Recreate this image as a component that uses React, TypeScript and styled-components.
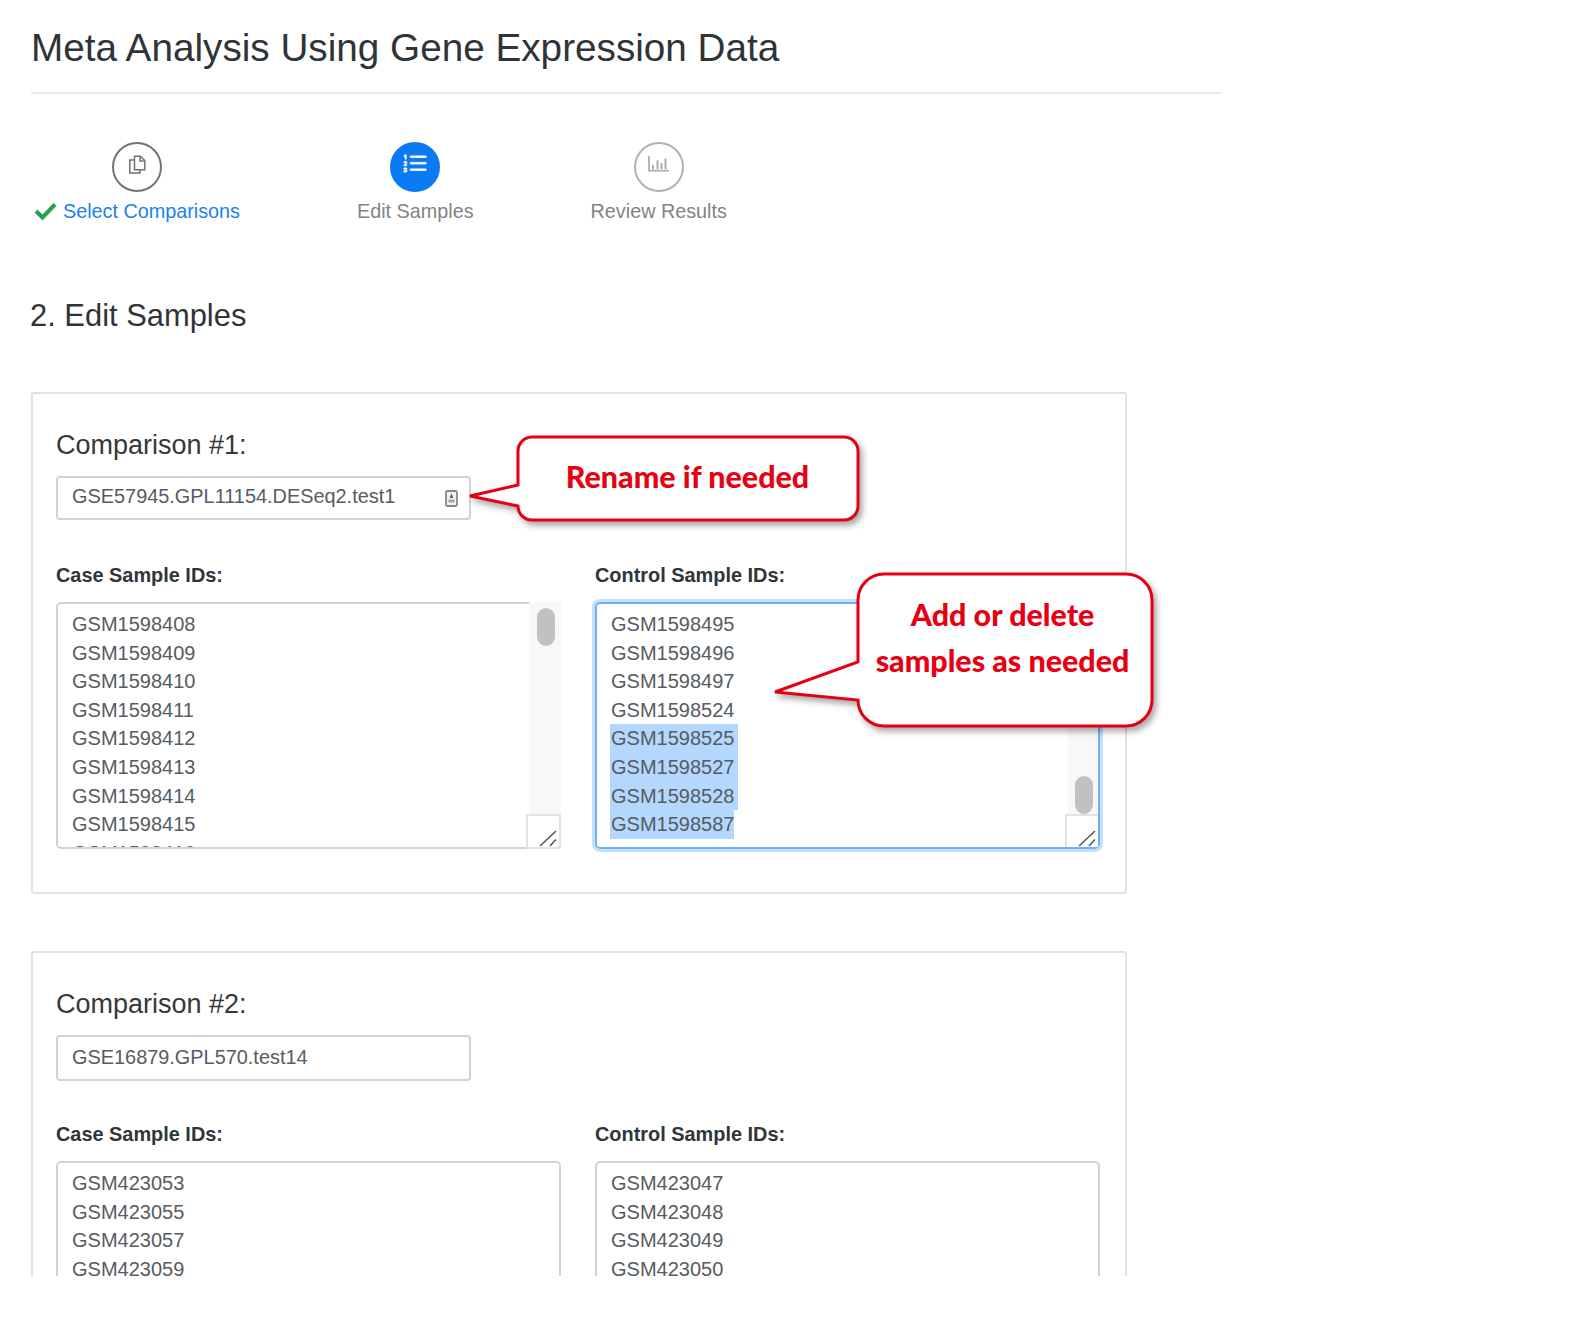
import styled, { createGlobalStyle } from "styled-components";
import { BsListOl } from "react-icons/bs";

const GlobalStyle = createGlobalStyle`
  html, body {
    margin: 0;
    padding: 0;
    background: #fff;
    font-family: "Liberation Sans", Arial, sans-serif;
  }
`;

const Page = styled.div`
  height: 1276px;
  width: 1222px;
  padding-left: 31px;
  overflow: hidden;
`;
const Title = styled.h1`
  margin: 0;
  height: 94px;
  width: 1191px;
  padding-top: 24px;
  box-sizing: border-box;
  border-bottom: 2px solid #e9e9e9;
  font-size: 38.7px;
  line-height: 48px;
  font-weight: 400;
  color: #2f3439;
  white-space: nowrap;
`;
const Steps = styled.div`
  display: flex;
  gap: 117px;
  margin-top: 48px;
  padding-left: 3px;
`;
const Step = styled.div`
  display: flex;
  flex-direction: column;
  align-items: center;
  gap: 5px;
`;
const StepCircle = styled.div<{ $state: "done" | "active" | "todo" }>`
  width: 50px;
  height: 50px;
  box-sizing: border-box;
  padding-bottom: 6px;
  border-radius: 50%;
  display: flex;
  align-items: center;
  justify-content: center;
  border: 2px solid
    ${(p) => (p.$state === "done" ? "#6f7479" : p.$state === "active" ? "#0a7bf3" : "#b0b3b6")};
  background: ${(p) => (p.$state === "active" ? "#0a7bf3" : "#fff")};
`;
const StepLabel = styled.div<{ $done?: boolean }>`
  display: flex;
  align-items: center;
  gap: 6px;
  font-size: 19.8px;
  line-height: 28px;
  color: ${(p) => (p.$done ? "#1a82ec" : "#808487")};
`;
const ListIcon = styled(BsListOl)`
  color: #fff;
  stroke: #fff;
  stroke-width: 0.5px;
`;
const SectionTitle = styled.h2`
  margin: 71px 0 0 -1px;
  font-size: 30.9px;
  line-height: 40px;
  font-weight: 400;
  color: #2f3439;
`;
const Card = styled.section<{ $top: number }>`
  position: relative;
  width: 1096px;
  box-sizing: border-box;
  margin-top: ${(p) => p.$top}px;
  padding: 33px 26px 43px 23px;
  border: 2px solid #e2e2e2;
  border-radius: 3px;
`;
const CardTitle = styled.div`
  font-size: 27px;
  line-height: 36px;
  color: #33383d;
`;
const NameInput = styled.div<{ $height: number; $below: number; $lift: number }>`
  width: 415px;
  height: ${(p) => p.$height}px;
  box-sizing: border-box;
  margin: 13px 0 ${(p) => p.$below}px;
  padding: 0 14px ${(p) => p.$lift}px;
  border: 2px solid #ced3d8;
  border-radius: 4px;
  display: flex;
  align-items: center;
  justify-content: space-between;
  font-size: 19.9px;
  color: #565c62;
`;
const Columns = styled.div`
  display: grid;
  grid-template-columns: 505px 505px;
  gap: 34px;
`;
const FieldLabel = styled.div`
  font-size: 19.9px;
  line-height: 28px;
  font-weight: 700;
  color: #30353a;
  margin-bottom: 13px;
`;
const ListBox = styled.div<{ $focused?: boolean }>`
  height: 247px;
  box-sizing: border-box;
  display: flex;
  border: 2px solid ${(p) => (p.$focused ? "#6eb2f5" : "#ced3d8")};
  border-radius: 5px;
  box-shadow: ${(p) => (p.$focused ? "0 0 0 3px #c5e0fd" : "none")};
`;
const Rows = styled.div`
  flex: 1;
  min-width: 0;
  overflow: hidden;
  padding: 6px 14px 0;
`;
const Row = styled.div`
  height: 28.6px;
  line-height: 28.6px;
  font-size: 20px;
  color: #565c62;
`;
const RowText = styled.span<{ $selected?: boolean; $last?: boolean }>`
  display: inline-block;
  height: 100%;
  background: ${(p) => (p.$selected ? "#b3d7fd" : "transparent")};
  margin-left: -1px;
  padding-left: 1px;
  padding-right: ${(p) => (p.$selected && !p.$last ? "4px" : "0")};
`;
const ScrollBar = styled.div<{ $cover?: boolean }>`
  width: ${(p) => (p.$cover ? 32 : 30)}px;
  margin: ${(p) => (p.$cover ? "-2px -2px -2px 0" : "0")};
  flex: none;
  display: flex;
  flex-direction: column;
  background: #f8f8f8;
  box-sizing: border-box;
`;
const ScrollTrack = styled.div<{ $atEnd?: boolean }>`
  flex: 1;
  display: flex;
  flex-direction: column;
  justify-content: ${(p) => (p.$atEnd ? "flex-end" : "flex-start")};
  align-items: center;
  padding-top: 6px;
`;
const ScrollThumb = styled.div`
  width: 18px;
  height: 38px;
  margin-left: 1px;
  border-radius: 9px;
  background: #c1c1c1;
`;
const Resizer = styled.div<{ $cover?: boolean }>`
  height: ${(p) => (p.$cover ? 35 : 33)}px;
  box-sizing: border-box;
  margin-left: -3px;
  background: #fff;
  border: 2px solid #e2e2e2;
  border-right-width: ${(p) => (p.$cover ? 2 : 0)}px;
  border-bottom-width: ${(p) => (p.$cover ? 2 : 0)}px;
  border-radius: 0 0 ${(p) => (p.$cover ? 4 : 0)}px 0;
  display: flex;
  align-items: flex-end;
  justify-content: flex-end;
`;
const Callout = styled.div<{
  $left: number;
  $top: number;
  $w: number;
  $h: number;
  $textLeft: number;
  $textBottom: number;
}>`
  position: absolute;
  left: ${(p) => p.$left}px;
  top: ${(p) => p.$top}px;
  width: ${(p) => p.$w}px;
  height: ${(p) => p.$h}px;
  padding: 0 0 ${(p) => p.$textBottom}px ${(p) => p.$textLeft}px;
  box-sizing: border-box;
  display: flex;
  flex-direction: column;
  align-items: center;
  justify-content: center;
`;
const CalloutShape = styled.svg`
  position: absolute;
  inset: 0;
  overflow: visible;
  filter: drop-shadow(3px 4px 3px rgba(0, 0, 0, 0.35));
`;
const CalloutText = styled.div`
  position: relative;
  font-family: Lato, "Open Sans", sans-serif;
  font-weight: 900;
  font-size: 30.4px;
  line-height: 46px;
  color: #e60012;
  white-space: nowrap;
`;
const AutofillSvg = styled.svg`
  flex: none;
  margin: 5px -3px 0 0;
`;

const FilesIcon = () => (
  <svg width="18" height="19" viewBox="0 0 18 19" fill="none" stroke="#6f7479" strokeWidth="1.5">
    <path d="M6.5 1.2h6l4.3 4.3v9.3H6.5z" />
    <path d="M12 1.2v4.8h4.8" />
    <path d="M6.5 5H1.8v13H12v-3.2" />
  </svg>
);

const ChartIcon = () => (
  <svg width="21" height="16" viewBox="0 0 21 16" fill="none" stroke="#a9acaf">
    <path d="M1 0v14.6h20" strokeWidth="1.7" />
    <path d="M5 13V9M9.5 13V4.5M13.5 13V7M17.5 13V2.5" strokeWidth="2" />
  </svg>
);

const CheckIcon = () => (
  <svg width="23" height="18" viewBox="0 0 23 18" fill="none" stroke="#22a34c" strokeWidth="4">
    <path d="M2 9l6.5 6.5L21 2.5" />
  </svg>
);

const AutofillIcon = () => (
  <AutofillSvg width="13" height="17" viewBox="0 0 13 17" fill="none">
    <rect x="1" y="1" width="11" height="15" rx="1.5" stroke="#85898d" strokeWidth="1.8" fill="#f1f1f1" />
    <path d="M6.5 3.5l2 4.5h-4z" fill="#5f6368" />
    <rect x="3.5" y="9.5" width="6" height="3" fill="#a5a8ab" />
  </AutofillSvg>
);

const ResizeGrip = () => (
  <svg width="22" height="18" viewBox="0 0 22 18" fill="none" stroke="#55595d" strokeWidth="1.6">
    <path d="M3 17L19 2M13 17l6-6.5" />
  </svg>
);

interface SampleListProps {
  ids: string[];
  selectedFrom?: number;
  focused?: boolean;
  scroll?: "top" | "end";
}

const SampleList = ({ ids, selectedFrom, focused, scroll }: SampleListProps) => (
  <ListBox $focused={focused}>
    <Rows>
      {ids.map((id, i) => {
        const selected = selectedFrom !== undefined && i >= selectedFrom;
        return (
          <Row key={id}>
            <RowText $selected={selected} $last={i === ids.length - 1}>
              {id}
            </RowText>
          </Row>
        );
      })}
    </Rows>
    {scroll && (
      <ScrollBar $cover={!focused}>
        <ScrollTrack $atEnd={scroll === "end"}>
          <ScrollThumb />
        </ScrollTrack>
        <Resizer $cover={!focused}>
          <ResizeGrip />
        </Resizer>
      </ScrollBar>
    )}
  </ListBox>
);

const App = () => (
  <Page>
    <GlobalStyle />
    <Title>Meta Analysis Using Gene Expression Data</Title>
    <Steps>
      <Step>
        <StepCircle $state="done">
          <FilesIcon />
        </StepCircle>
        <StepLabel $done>
          <CheckIcon />
          Select Comparisons
        </StepLabel>
      </Step>
      <Step>
        <StepCircle $state="active">
          <ListIcon size={26} />
        </StepCircle>
        <StepLabel>Edit Samples</StepLabel>
      </Step>
      <Step>
        <StepCircle $state="todo">
          <ChartIcon />
        </StepCircle>
        <StepLabel>Review Results</StepLabel>
      </Step>
    </Steps>
    <SectionTitle>2. Edit Samples</SectionTitle>

    <Card $top={56}>
      <CardTitle>Comparison #1:</CardTitle>
      <NameInput $height={44} $below={41} $lift={4}>
        GSE57945.GPL11154.DESeq2.test1
        <AutofillIcon />
      </NameInput>
      <Columns>
        <div>
          <FieldLabel>Case Sample IDs:</FieldLabel>
          <SampleList
            scroll="top"
            ids={[
              "GSM1598408",
              "GSM1598409",
              "GSM1598410",
              "GSM1598411",
              "GSM1598412",
              "GSM1598413",
              "GSM1598414",
              "GSM1598415",
              "GSM1598416",
            ]}
          />
        </div>
        <div>
          <FieldLabel>Control Sample IDs:</FieldLabel>
          <SampleList
            focused
            scroll="end"
            selectedFrom={4}
            ids={[
              "GSM1598495",
              "GSM1598496",
              "GSM1598497",
              "GSM1598524",
              "GSM1598525",
              "GSM1598527",
              "GSM1598528",
              "GSM1598587",
            ]}
          />
        </div>
      </Columns>
      <Callout $left={437} $top={41} $w={390} $h={87} $textLeft={45} $textBottom={5}>
        <CalloutShape width="390" height="87" viewBox="0 0 390 87">
          <path
            d="M48 16a14 14 0 0 1 14-14h312a14 14 0 0 1 14 14v55a14 14 0 0 1-14 14H62a14 14 0 0 1-14-14L0 61l48-11z"
            fill="#fff"
            stroke="#e60012"
            strokeWidth="3"
          />
        </CalloutShape>
        <CalloutText>Rename if needed</CalloutText>
      </Callout>
      <Callout $left={742} $top={178} $w={378} $h={156} $textLeft={77} $textBottom={27}>
        <CalloutShape width="378" height="156" viewBox="0 0 378 156">
          <path
            d="M83 28a26 26 0 0 1 26-26h242a26 26 0 0 1 26 26v100a26 26 0 0 1-26 26H109a26 26 0 0 1-26-26L0 120l83-30z"
            fill="#fff"
            stroke="#e60012"
            strokeWidth="3"
          />
        </CalloutShape>
        <CalloutText>Add or delete</CalloutText>
        <CalloutText>samples as needed</CalloutText>
      </Callout>
    </Card>

    <Card $top={57}>
      <CardTitle>Comparison #2:</CardTitle>
      <NameInput $height={46} $below={39} $lift={2}>
        GSE16879.GPL570.test14
      </NameInput>
      <Columns>
        <div>
          <FieldLabel>Case Sample IDs:</FieldLabel>
          <SampleList ids={["GSM423053", "GSM423055", "GSM423057", "GSM423059"]} />
        </div>
        <div>
          <FieldLabel>Control Sample IDs:</FieldLabel>
          <SampleList ids={["GSM423047", "GSM423048", "GSM423049", "GSM423050"]} />
        </div>
      </Columns>
    </Card>
  </Page>
);

export default App;
